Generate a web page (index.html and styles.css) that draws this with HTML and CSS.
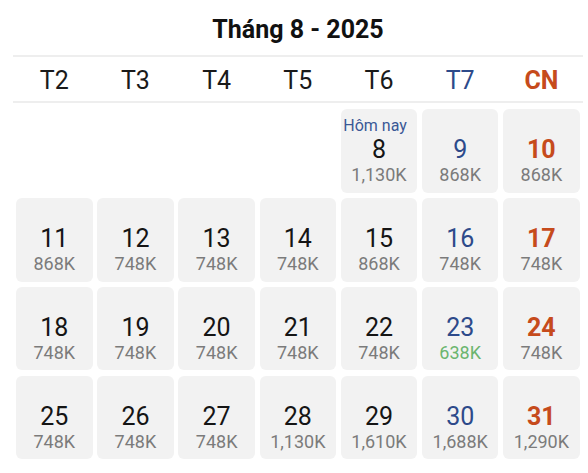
FILE: index.html
```html
<!DOCTYPE html>
<html lang="vi">
<head>
<meta charset="utf-8">
<link rel="stylesheet" href="styles.css">
</head>
<body>
<div class="cal">
  <div class="title">Tháng 8 - 2025</div>
  <div class="weekdays">
    <div>T2</div><div>T3</div><div>T4</div><div>T5</div><div>T6</div><div class="sat">T7</div><div class="sun">CN</div>
  </div>
  <div class="grid">
    <div class="empty"></div><div class="empty"></div><div class="empty"></div><div class="empty"></div>
    <div class="day"><span class="lbl">Hôm nay</span><span class="num">8</span><span class="price">1,130K</span></div>
    <div class="day sat"><span class="lbl"></span><span class="num">9</span><span class="price">868K</span></div>
    <div class="day sun"><span class="lbl"></span><span class="num">10</span><span class="price">868K</span></div>

    <div class="day"><span class="lbl"></span><span class="num">11</span><span class="price">868K</span></div>
    <div class="day"><span class="lbl"></span><span class="num">12</span><span class="price">748K</span></div>
    <div class="day"><span class="lbl"></span><span class="num">13</span><span class="price">748K</span></div>
    <div class="day"><span class="lbl"></span><span class="num">14</span><span class="price">748K</span></div>
    <div class="day"><span class="lbl"></span><span class="num">15</span><span class="price">868K</span></div>
    <div class="day sat"><span class="lbl"></span><span class="num">16</span><span class="price">748K</span></div>
    <div class="day sun"><span class="lbl"></span><span class="num">17</span><span class="price">748K</span></div>

    <div class="day"><span class="lbl"></span><span class="num">18</span><span class="price">748K</span></div>
    <div class="day"><span class="lbl"></span><span class="num">19</span><span class="price">748K</span></div>
    <div class="day"><span class="lbl"></span><span class="num">20</span><span class="price">748K</span></div>
    <div class="day"><span class="lbl"></span><span class="num">21</span><span class="price">748K</span></div>
    <div class="day"><span class="lbl"></span><span class="num">22</span><span class="price">748K</span></div>
    <div class="day sat"><span class="lbl"></span><span class="num">23</span><span class="price cheap">638K</span></div>
    <div class="day sun"><span class="lbl"></span><span class="num">24</span><span class="price">748K</span></div>

    <div class="day"><span class="lbl"></span><span class="num">25</span><span class="price">748K</span></div>
    <div class="day"><span class="lbl"></span><span class="num">26</span><span class="price">748K</span></div>
    <div class="day"><span class="lbl"></span><span class="num">27</span><span class="price">748K</span></div>
    <div class="day"><span class="lbl"></span><span class="num">28</span><span class="price">1,130K</span></div>
    <div class="day"><span class="lbl"></span><span class="num">29</span><span class="price">1,610K</span></div>
    <div class="day sat"><span class="lbl"></span><span class="num">30</span><span class="price">1,688K</span></div>
    <div class="day sun"><span class="lbl"></span><span class="num">31</span><span class="price">1,290K</span></div>
  </div>
</div>
</body>
</html>
```
FILE: styles.css
```css
* { box-sizing: border-box; }
html, body {
  margin: 0;
  padding: 0;
  background: #ffffff;
}
body {
  font-family: Roboto, "Liberation Sans", sans-serif;
  color: #151515;
  width: 588px;
  height: 473px;
  overflow: hidden;
}
.cal {
  padding: 0 5px 0 13px;
}
.title {
  padding-top: 14px;
  padding-bottom: 9px;
  line-height: 32px;
  font-size: 25px;
  font-weight: 700;
  text-align: center;
  color: #111;
  border-bottom: 2px solid #eeeeee;
}
.weekdays {
  display: grid;
  grid-template-columns: repeat(7, 76.5px);
  column-gap: 4.7px;
  padding: 4px 0 0 3px;
  line-height: 40px;
  font-size: 25px;
  text-align: center;
  border-bottom: 2px solid #eeeeee;
  color: #1a1a1a;
}
.weekdays .sat { color: #2d4a8a; }
.weekdays .sun { color: #c64b1c; font-weight: 700; }
.grid {
  display: grid;
  grid-template-columns: repeat(7, 76.5px);
  grid-auto-rows: 83.4px;
  column-gap: 4.7px;
  row-gap: 5.5px;
  padding: 6.3px 0 0 3px;
}
.day {
  background: #f2f2f2;
  border-radius: 6px;
  display: flex;
  flex-direction: column;
  align-items: center;
  justify-content: center;
  text-align: center;
}
.lbl {
  display: block;
  align-self: flex-start;
  margin-left: 2.5px;
  font-size: 16px;
  line-height: 20px;
  height: 20px;
  color: #3a5896;
  white-space: nowrap;
}
.num {
  display: block;
  font-size: 25px;
  line-height: 28px;
  color: #151515;
}
.price {
  display: block;
  font-size: 18px;
  line-height: 22px;
  color: #7b7b7b;
}
.price.cheap { color: #6bb56e; }
.day.sat .num { color: #2d4a8a; }
.day.sun .num { color: #c64b1c; font-weight: 700; }
```
